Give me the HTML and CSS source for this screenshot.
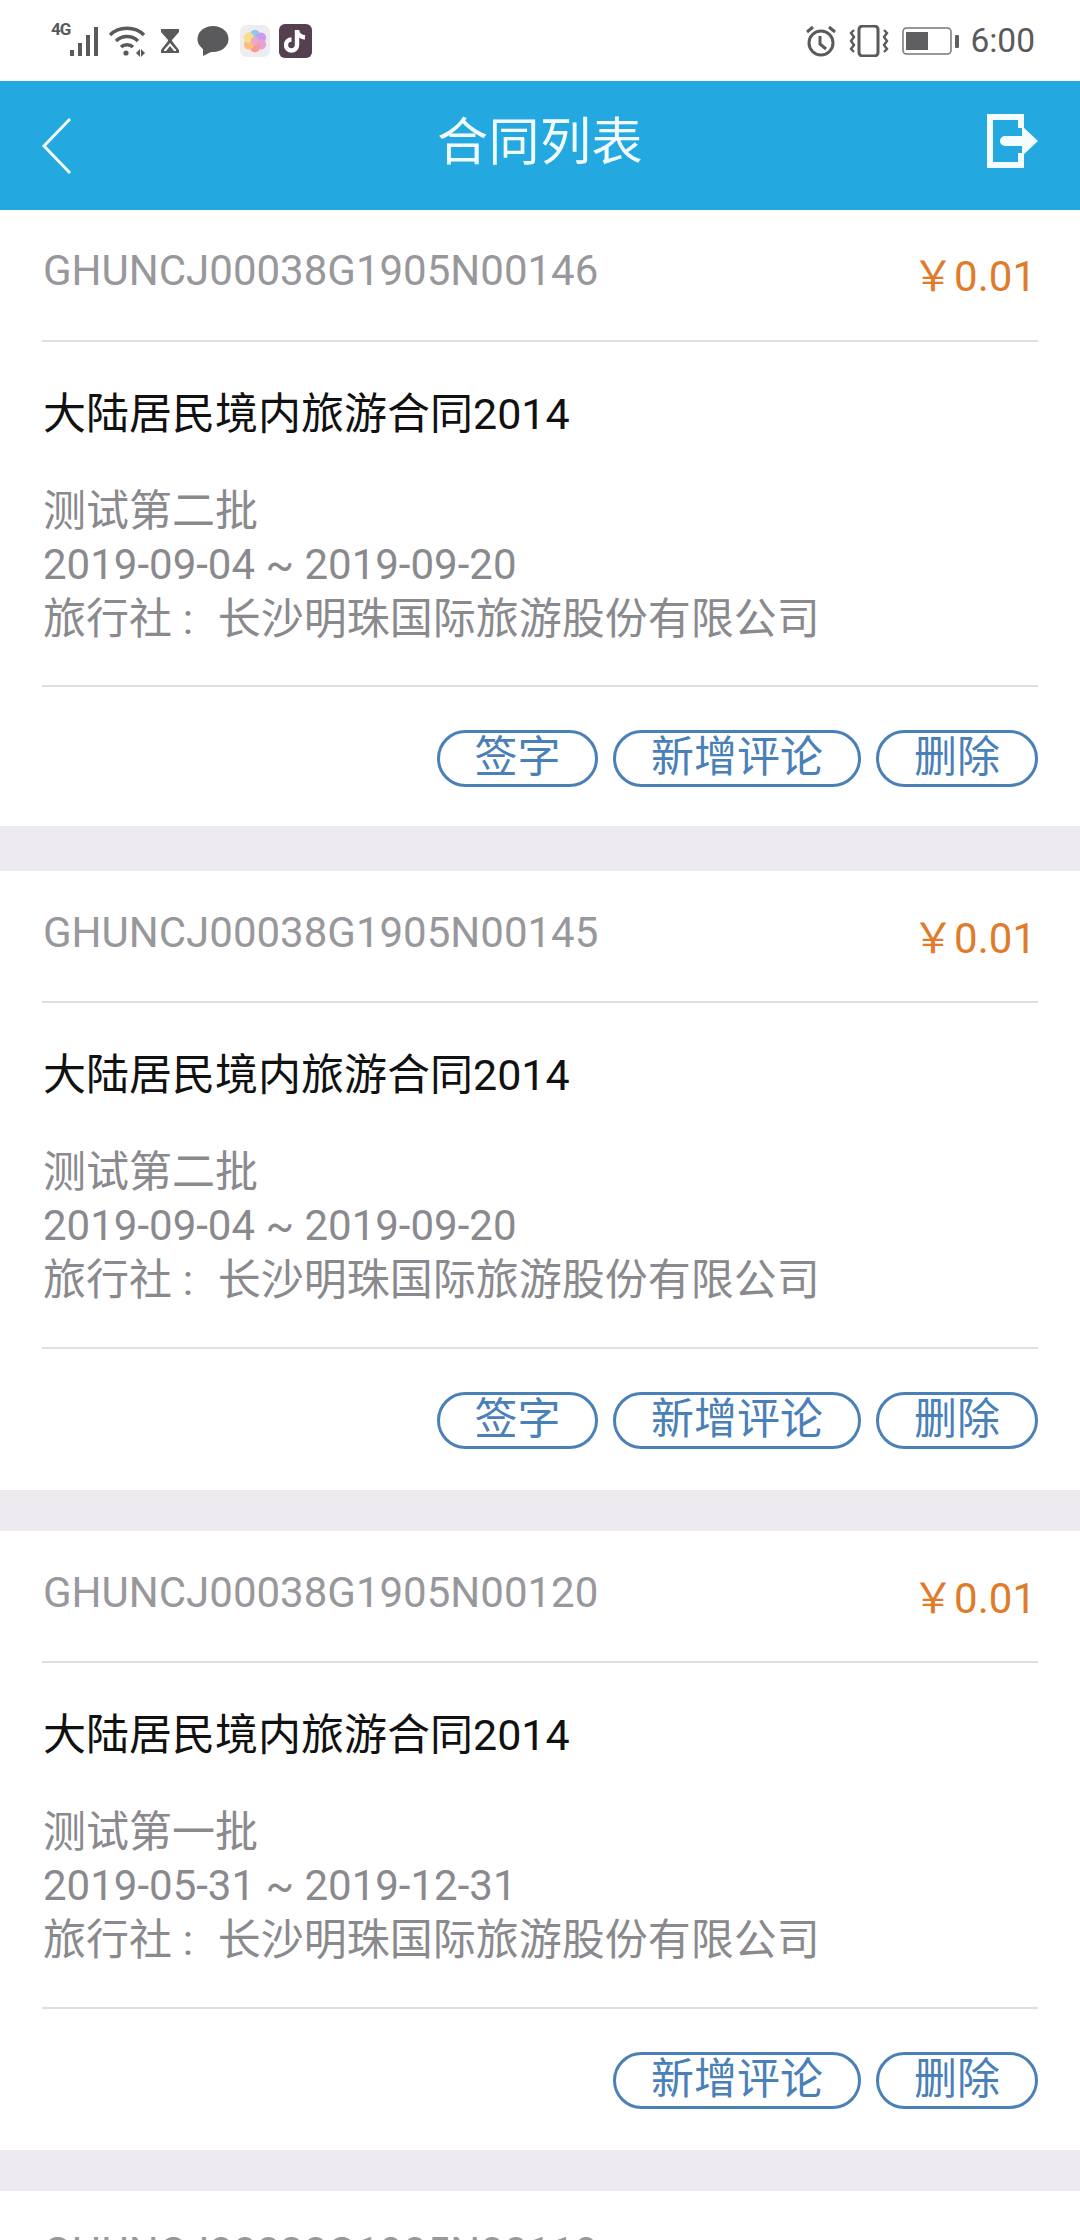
FILE: index.html
```html
<!DOCTYPE html>
<html lang="zh-CN">
<head>
    <meta charset="UTF-8">
    <meta name="viewport" content="width=device-width, initial-scale=1.0">
    <title>合同列表</title>
    <link rel="stylesheet" href="styles.css">
</head>
<body>
    <div class="status-bar">
        <div class="status-left">
            <span class="net-label">4G</span>
            <svg class="icon-signal" width="32" height="32" viewBox="0 0 32 32">
                <rect x="1" y="25" width="4" height="6" fill="#5a5a5c"/>
                <rect x="9" y="18" width="4" height="13" fill="#5a5a5c"/>
                <rect x="17" y="10" width="4" height="21" fill="#5a5a5c"/>
                <rect x="25" y="2" width="4" height="29" fill="#5a5a5c"/>
            </svg>
            <svg class="icon-wifi" width="38" height="32" viewBox="0 0 38 32" fill="none" stroke="#5a5a5c" stroke-width="3.4">
                <path d="M2 10C11 1 27 1 36 10"/>
                <path d="M8 16C14 10 24 10 30 16"/>
                <path d="M13 22C16 19 22 19 25 22"/>
                <circle cx="18" cy="28" r="2.6" fill="#5a5a5c" stroke="none"/>
                <path d="M28 28l4-4v8zM33 24l4 4-4 4z" fill="#5a5a5c" stroke="none"/>
            </svg>
            <svg class="icon-timer" width="20" height="26" viewBox="0 0 20 26">
                <path d="M1 1h18v3l-7 8v1l7 9v3H1v-3l7-9v-1L1 4z" fill="#5a5a5c"/>
                <path d="M10 15l6 7v1H4v-1z" fill="#fff"/>
                <path d="M10 18l4 5H6z" fill="#5a5a5c"/>
            </svg>
            <svg class="icon-chat" width="32" height="32" viewBox="0 0 32 32">
                <ellipse cx="16" cy="14" rx="15.5" ry="13" fill="#5a5a5c"/>
                <path d="M6 23l0 8 10-5z" fill="#5a5a5c"/>
            </svg>
            <span class="app-flower">
                <svg width="24" height="26" viewBox="0 0 28 28">
                    <circle cx="14" cy="7" r="6" fill="#8fc7f0"/>
                    <circle cx="21" cy="10" r="6" fill="#c79bee"/>
                    <circle cx="21" cy="18" r="6" fill="#e8a0d8"/>
                    <circle cx="14" cy="21" r="6" fill="#f59a9a"/>
                    <circle cx="7" cy="18" r="6" fill="#fbbf7a"/>
                    <circle cx="7" cy="10" r="6" fill="#f8dc8a"/>
                    <circle cx="14" cy="14" r="5" fill="#e8a8c8"/>
                </svg>
            </span>
            <span class="app-tiktok">
                <svg width="24" height="26" viewBox="0 0 24 26" fill="none" stroke="#fff" stroke-width="4.4">
                    <path d="M13 2v15a5.5 5.500 0 1 1-5.500-5.500"/>
                    <path d="M13 3c1 4 4 6 8 6.500"/>
                </svg>
            </span>
        </div>
        <div class="status-right">
            <svg class="icon-alarm" width="32" height="32" viewBox="0 0 32 32" fill="none" stroke="#5a5a5c" stroke-width="3">
                <circle cx="16" cy="18" r="12"/>
                <path d="M15 11v8l6 5"/>
                <path d="M2 7l6-5M30 7l-6-5"/>
            </svg>
            <svg class="icon-vibrate" width="40" height="32" viewBox="0 0 40 32" fill="none" stroke="#5a5a5c" stroke-width="2.400">
                <rect x="10" y="1" width="19" height="30" rx="3.500" stroke-width="3"/>
                <path d="M5 5l-3 3 3 4-3 4 3 4-3 4 3 3"/>
                <path d="M35 5l3 3-3 4 3 4-3 4 3 4-3 3"/>
            </svg>
            <svg class="icon-battery" width="57" height="28" viewBox="0 0 57 28">
                <rect x="1" y="1" width="48" height="26" rx="3.500" fill="none" stroke="#77777a" stroke-width="1.500"/>
                <rect x="4" y="5" width="22" height="18" fill="#5f5f62"/>
                <rect x="53" y="8" width="4" height="13" rx="1" fill="#5f5f62"/>
            </svg>
            <span class="clock">6:00</span>
        </div>
    </div>

    <header class="title-bar">
        <svg class="back-icon" width="32" height="58" viewBox="0 0 32 58" fill="none" stroke="#f2fbff" stroke-width="3">
            <path d="M29 2L3 29l26 27"/>
        </svg>
        <h1>合同列表</h1>
        <svg class="exit-icon" width="52" height="54" viewBox="0 0 52 54">
            <path d="M0 0h37v14h-6V6H6v42h25v-9h6v15H0z" fill="#f5fcff"/>
            <path d="M18 22h17V12l16 15-16 15V32H18a5 5 0 0 1 0-10z" fill="#f5fcff"/>
        </svg>
    </header>

    <main>
        <section class="card card-first">
            <div class="card-top">
                <span class="contract-no">GHUNCJ00038G1905N00146</span>
                <span class="price"><i>￥</i>0.01</span>
            </div>
            <div class="card-title">大陆居民境内旅游合同2014</div>
            <div class="card-info">
                <p>测试第二批</p>
                <p class="date">2019-09-04 ~ 2019-09-20</p>
                <p>旅行社 <span class="colon">:</span>长沙明珠国际旅游股份有限公司</p>
            </div>
            <div class="card-actions">
                <button class="btn-sign">签字</button>
                <button class="btn-comment">新增评论</button>
                <button class="btn-delete">删除</button>
            </div>
        </section>

        <section class="card">
            <div class="card-top">
                <span class="contract-no">GHUNCJ00038G1905N00145</span>
                <span class="price"><i>￥</i>0.01</span>
            </div>
            <div class="card-title">大陆居民境内旅游合同2014</div>
            <div class="card-info">
                <p>测试第二批</p>
                <p class="date">2019-09-04 ~ 2019-09-20</p>
                <p>旅行社 <span class="colon">:</span>长沙明珠国际旅游股份有限公司</p>
            </div>
            <div class="card-actions">
                <button class="btn-sign">签字</button>
                <button class="btn-comment">新增评论</button>
                <button class="btn-delete">删除</button>
            </div>
        </section>

        <section class="card">
            <div class="card-top">
                <span class="contract-no">GHUNCJ00038G1905N00120</span>
                <span class="price"><i>￥</i>0.01</span>
            </div>
            <div class="card-title">大陆居民境内旅游合同2014</div>
            <div class="card-info">
                <p>测试第一批</p>
                <p class="date">2019-05-31 ~ 2019-12-31</p>
                <p>旅行社 <span class="colon">:</span>长沙明珠国际旅游股份有限公司</p>
            </div>
            <div class="card-actions">
                <button class="btn-comment">新增评论</button>
                <button class="btn-delete">删除</button>
            </div>
        </section>

        <section class="card">
            <div class="card-top">
                <span class="contract-no">GHUNCJ00038G1905N00119</span>
            </div>
        </section>
    </main>
</body>
</html>
```

FILE: styles.css
```css
* {
    box-sizing: border-box;
}

html, body {
    height: 2240px;
    overflow: hidden;
}

body {
    margin: 0;
    background-color: #edebef;
    font-family: Roboto, "Noto Sans CJK SC", sans-serif;
}

.status-bar {
    height: 81px;
    background-color: #fff;
    display: flex;
    justify-content: space-between;
    align-items: center;
    padding: 0 45px 0 51px;
}

.status-left, .status-right {
    display: flex;
    align-items: center;
}

.net-label {
    font-size: 17px;
    font-weight: 700;
    color: #5a5a5c;
    align-self: flex-start;
    margin-top: -5px;
    width: 18px;
    letter-spacing: -1px;
}

.icon-wifi {
    margin-left: 7px;
}

.icon-timer {
    margin-left: 14px;
}

.icon-chat {
    margin-left: 17px;
}

.app-flower {
    width: 30px;
    height: 32px;
    margin-left: 11px;
    background-color: #eeecec;
    border-radius: 7px;
    display: flex;
    align-items: center;
    justify-content: center;
}

.app-tiktok {
    width: 33px;
    height: 34px;
    margin-left: 9px;
    background-color: #54404e;
    border-radius: 6px;
    display: flex;
    align-items: center;
    justify-content: center;
}

.icon-vibrate {
    margin-left: 12px;
}

.icon-battery {
    margin-left: 13px;
}

.clock {
    margin-left: 11px;
    font-size: 33.5px;
    color: #5a5a5c;
}

.title-bar {
    height: 129px;
    background-color: #23a8e0;
    display: grid;
    grid-template-columns: 1fr auto 1fr;
    align-items: center;
    padding: 0 41px;
}

.title-bar h1 {
    margin: 0 0 15px;
    font-size: 51px;
    font-weight: 400;
    color: #f2fbff;
    letter-spacing: 0.5px;
}

.exit-icon {
    justify-self: end;
    margin-bottom: 10px;
}

.card {
    background-color: #fff;
    padding: 0 42px;
    margin-bottom: 41px;
    height: 619px;
}

.card-first {
    height: 616px;
    margin-bottom: 45px;
}

.card-top {
    height: 132px;
    display: flex;
    justify-content: space-between;
    border-bottom: 2px solid #dfdfdf;
    padding-top: 37px;
}

.card-first .card-top {
    padding-top: 36px;
}

.contract-no {
    font-size: 42px;
    line-height: 50px;
    color: #98989c;
    margin-left: 1px;
}

.price {
    font-size: 42px;
    line-height: 50px;
    color: #e07b2a;
    margin-top: 6px;
    padding-right: 2px;
}

.price i {
    font-style: normal;
}

.card-title {
    font-size: 43px;
    line-height: 60px;
    color: #111;
    margin: 42px 0 0 1px;
}

.card-info {
    margin-top: 40px;
    padding-bottom: 40px;
    border-bottom: 2px solid #dfdfdf;
}

.card-first .card-info {
    padding-bottom: 39px;
}

.card-info p {
    margin: 0 0 0 1px;
    font-size: 43px;
    line-height: 54px;
    color: #8a8a8e;
}

.card-info .date {
    font-size: 42px;
}

.colon {
    display: inline-block;
    width: 35px;
}

.card-actions {
    display: flex;
    justify-content: flex-end;
    gap: 15px;
    margin-top: 43px;
}

.card-actions button {
    height: 57px;
    border: 3px solid #4a80b8;
    border-radius: 29px;
    background-color: #fff;
    color: #4a80b8;
    font-family: inherit;
    font-size: 43px;
    line-height: 1;
    padding: 0 0 2px;
}

.btn-sign {
    width: 161px;
}

.btn-delete {
    width: 162px;
}

.btn-comment {
    width: 248px;
}
```
